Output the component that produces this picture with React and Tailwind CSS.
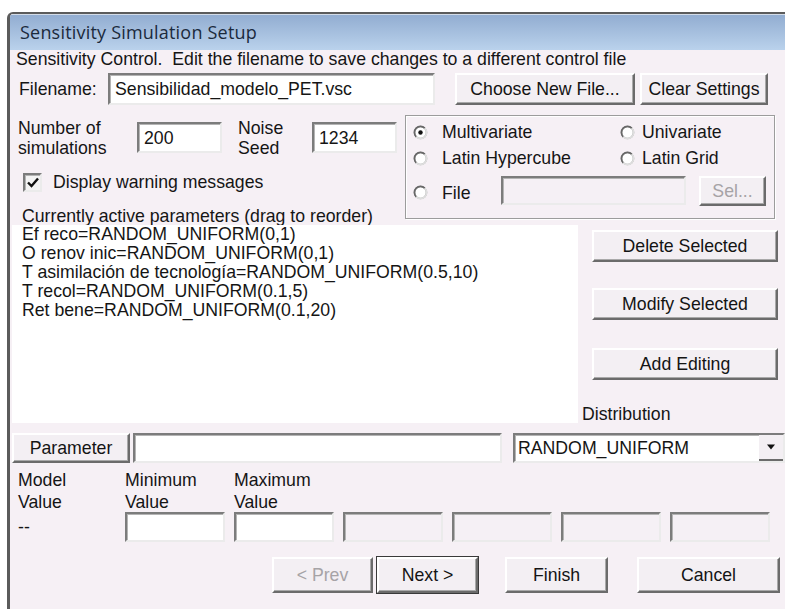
import React from "react";

const raised =
  "border-2 border-t-white border-l-white border-r-[#6b6b6b] border-b-[#6b6b6b] shadow-[inset_-1px_-1px_0_#a9a9a9] bg-[#f3eff3]";
const sunken =
  "border-2 border-t-[#7c7c7c] border-l-[#7c7c7c] border-r-[#ebebeb] border-b-[#ebebeb] shadow-[inset_1px_1px_0_#b4b4b4]";

function Button({ children, className = "", disabled, isDefault }) {
  return (
    <div
      className={`flex items-center justify-center whitespace-nowrap ${raised} ${
        disabled ? "text-[#a6a3a6]" : "text-[#141414]"
      } ${isDefault ? "outline outline-1 outline-[#3a3a3a]" : ""} ${className}`}
    >
      {children}
    </div>
  );
}

function Field({ value = "", className = "", disabled }) {
  return (
    <div
      className={`flex items-center pl-[5px] whitespace-nowrap overflow-hidden ${sunken} ${
        disabled ? "bg-[#f5f0f5]" : "bg-white"
      } ${className}`}
    >
      {value}
    </div>
  );
}

function Radio({ checked }) {
  return (
    <svg width="15" height="15" viewBox="0 0 15 15" className="shrink-0">
      <circle cx="7.5" cy="7.5" r="6" fill="#fff" stroke="#acacac" strokeWidth="1.7" />
      <path d="M11.8 3.2 A6 6 0 0 0 3.2 11.8" fill="none" stroke="#686868" strokeWidth="1.7" />
      <path d="M3.2 11.8 A6 6 0 0 0 11.8 3.2" fill="none" stroke="#dedede" strokeWidth="1.7" />
      {checked && <circle cx="7.5" cy="7.5" r="2.2" fill="#111" />}
    </svg>
  );
}

function Check() {
  return (
    <div className={`w-[19px] h-[19px] flex items-center justify-center bg-[#f4f4f4] ${sunken}`}>
      <svg width="12" height="11" viewBox="0 0 12 11">
        <path d="M1 5.5 L4.5 9 L11 1.5" fill="none" stroke="#111" strokeWidth="2.4" />
      </svg>
    </div>
  );
}

const params = [
  "Ef reco=RANDOM_UNIFORM(0,1)",
  "O renov inic=RANDOM_UNIFORM(0,1)",
  "T asimilación de tecnología=RANDOM_UNIFORM(0.5,10)",
  "T recol=RANDOM_UNIFORM(0.1,5)",
  "Ret bene=RANDOM_UNIFORM(0.1,20)",
];

export default function App() {
  return (
    <div className="w-[785px] h-[609px] bg-white overflow-hidden pt-[12px] pl-[7px]">
      <div className="h-[597px] w-[790px] border-l-[3px] border-t-2 border-[#5b5b5b] rounded-tl-[6px] overflow-hidden bg-[#f6f0f5] flex flex-col">
        {/* Title bar */}
        <div className="h-[36px] shrink-0 bg-gradient-to-b from-[#92add1] to-[#bad2ec] border-t border-[#d3dce8] flex items-center pl-[10px] font-['Open_Sans',sans-serif] text-[18px] tracking-[0.2px] text-[#1b2a3c]">
          Sensitivity Simulation Setup
        </div>

        <div className="flex flex-col font-['Liberation_Sans',Arial,sans-serif] text-[17.7px] leading-[18px] text-[#151515]">
          <div className="h-[18px] pl-[6px] whitespace-nowrap">
            Sensitivity Control.&nbsp; Edit the filename to save changes to a different control file
          </div>

          {/* Filename row */}
          <div className="mt-[5px] h-[32px] flex items-center">
            <div className="ml-[9px] w-[89px]">Filename:</div>
            <Field value="Sensibilidad_modelo_PET.vsc" className="w-[327px] h-full" />
            <Button className="ml-[20px] w-[180px] h-full">Choose New File...</Button>
            <Button className="ml-[5px] w-[128px] h-full">Clear Settings</Button>
          </div>

          {/* Counts, options and method */}
          <div className="mt-[10px] flex">
            <div className="w-[395px] flex flex-col">
              <div className="flex h-[42px] items-start">
                <div className="ml-[8px] w-[119px] leading-[20px] pt-[3px]">
                  Number of
                  <br />
                  simulations
                </div>
                <Field value="200" className="mt-[7px] w-[85px] h-[31px]" />
                <div className="ml-[16px] w-[74px] leading-[20px] pt-[3px]">
                  Noise
                  <br />
                  Seed
                </div>
                <Field value="1234" className="mt-[7px] w-[85px] h-[31px]" />
              </div>
              <div className="mt-[15px] h-[20px] ml-[13px] flex items-center gap-[11px]">
                <Check />
                <span>Display warning messages</span>
              </div>
              <div className="mt-[15px] h-[18px] ml-[12px] whitespace-nowrap">
                Currently active parameters (drag to reorder)
              </div>
            </div>

            <div className="w-[370px] h-[104px] border border-[#9c9c9c] shadow-[inset_1px_1px_0_#fff,1px_1px_0_#fff] pl-[7px] pt-[3px] flex flex-col">
              <div className="h-[26px] flex items-center">
                <div className="w-[207px] flex items-center gap-[14px]">
                  <Radio checked />
                  Multivariate
                </div>
                <div className="flex items-center gap-[7px]">
                  <Radio />
                  Univariate
                </div>
              </div>
              <div className="h-[26px] flex items-center">
                <div className="w-[207px] flex items-center gap-[14px]">
                  <Radio />
                  Latin Hypercube
                </div>
                <div className="flex items-center gap-[7px]">
                  <Radio />
                  Latin Grid
                </div>
              </div>
              <div className="mt-[5px] h-[29px] flex items-center">
                <div className="w-[88px] flex items-center gap-[14px] pt-[4px]">
                  <Radio />
                  File
                </div>
                <Field disabled className="w-[185px] h-full" />
                <Button disabled className="ml-[13px] w-[67px] h-[30px]">
                  Sel...
                </Button>
              </div>
            </div>
          </div>

          {/* Parameter list and actions */}
          <div className="flex h-[198px]">
            <div className="ml-[2px] w-[566px] bg-white px-[10px]">
              {params.map((p) => (
                <div key={p} className="h-[19px] leading-[19px] whitespace-nowrap">
                  {p}
                </div>
              ))}
            </div>
            <div className="w-[207px] flex flex-col">
              <Button className="ml-[14px] mt-[5px] w-[186px] h-[32px]">Delete Selected</Button>
              <Button className="ml-[14px] mt-[26px] w-[186px] h-[32px]">Modify Selected</Button>
              <Button className="ml-[14px] mt-[28px] w-[186px] h-[32px]">Add Editing</Button>
              <div className="mt-auto ml-[4px] h-[18px]">Distribution</div>
            </div>
          </div>

          {/* Parameter editor */}
          <div className="mt-[10px] h-[30px] flex">
            <Button className="ml-[2px] w-[118px] h-full">Parameter</Button>
            <Field className="ml-[3px] w-[369px] h-full" />
            <div className={`ml-[11px] w-[272px] h-full flex items-center bg-white ${sunken}`}>
              <span className="flex-1 pl-[3px]">RANDOM_UNIFORM</span>
              <div className="w-[24px] h-full flex items-center justify-center bg-[#f3eff3] border-b-2 border-b-[#6b6b6b]">
                <svg width="10" height="6" viewBox="0 0 10 6">
                  <path d="M1 0.5 L9 0.5 L5 5.5 Z" fill="#111" />
                </svg>
              </div>
            </div>
          </div>

          <div className="mt-[6px] h-[43px] flex leading-[22px]">
            <div className="ml-[8px] w-[107px]">
              Model
              <br />
              Value
            </div>
            <div className="w-[109px]">
              Minimum
              <br />
              Value
            </div>
            <div>
              Maximum
              <br />
              Value
            </div>
          </div>

          <div className="h-[30px] flex items-center gap-[9px]">
            <div className="ml-[8px] w-[98px]">--</div>
            <Field className="w-[100px] h-full" />
            <Field className="w-[100px] h-full" />
            <Field disabled className="w-[100px] h-full" />
            <Field disabled className="w-[100px] h-full" />
            <Field disabled className="w-[100px] h-full" />
            <Field disabled className="w-[100px] h-full" />
          </div>

          {/* Wizard buttons */}
          <div className="mt-[15px] h-[36px] flex">
            <Button disabled className="ml-[262px] w-[101px] h-full">
              &lt; Prev
            </Button>
            <Button isDefault className="ml-[4px] w-[101px] h-full">
              Next &gt;
            </Button>
            <Button className="ml-[27px] w-[103px] h-full">Finish</Button>
            <Button className="ml-[29px] w-[143px] h-full">Cancel</Button>
          </div>
        </div>
      </div>
    </div>
  );
}
